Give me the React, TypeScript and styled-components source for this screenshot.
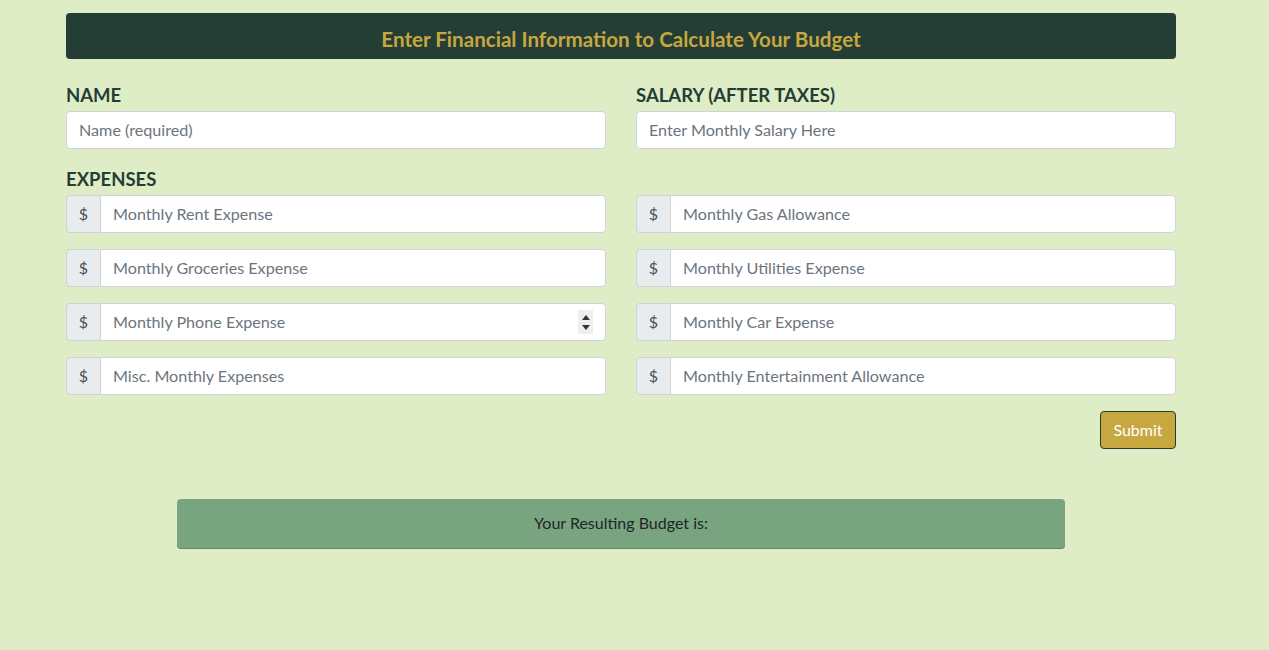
import React from "react";
import styled, { createGlobalStyle } from "styled-components";

const Global = createGlobalStyle`
  html, body { margin: 0; padding: 0; background: #dfedc6; }
  body { font-family: Lato, "Open Sans", sans-serif; color: #212529; }
  * { box-sizing: border-box; }
`;

const Page = styled.div`
  width: 1110px;
  margin-left: 66px;
  padding-top: 13px;
  padding-bottom: 102px;
`;

const TitleBar = styled.h1`
  margin: 0 0 22px;
  height: 46px;
  padding-top: 7px;
  line-height: 38px;
  background: #243d35;
  border-radius: 4px;
  color: #c7a740;
  font-size: 20.6px;
  font-weight: 700;
  text-align: center;
`;

const Grid = styled.div`
  display: grid;
  grid-template-columns: 540px 540px;
  column-gap: 30px;
`;

const Field = styled.div<{ $mb?: number }>`
  display: flex;
  flex-direction: column;
  margin-bottom: ${(p) => p.$mb ?? 16}px;
`;

const Label = styled.label`
  display: block;
  font-size: 18.5px;
  font-weight: 700;
  line-height: 27px;
  padding-top: 1px;
  margin-bottom: 2px;
  color: #243d35;
`;

const Input = styled.input`
  display: block;
  width: 100%;
  height: 38px;
  padding: 5px 12px 7px;
  font-family: Lato, "Open Sans", sans-serif;
  font-size: 16.15px;
  color: #495057;
  background: #fff;
  border: 1px solid #ced4da;
  border-radius: 4px;
  outline: none;
  &::placeholder { color: #6c757d; }
`;

const Group = styled.div`
  position: relative;
  display: flex;
  height: 38px;
  margin-bottom: 16px;
`;

const Addon = styled.span`
  display: flex;
  align-items: center;
  justify-content: center;
  width: 34px;
  flex: none;
  padding-bottom: 2px;
  background: #e9ecef;
  border: 1px solid #ced4da;
  border-right: none;
  border-radius: 4px 0 0 4px;
  color: #495057;
  font-size: 16px;
`;

const GroupInput = styled(Input)`
  border-radius: 0 4px 4px 0;
  flex: 1;
`;

const Spinner = styled.span`
  position: absolute;
  right: 13px;
  top: 7px;
  width: 15px;
  height: 24px;
  background: #efefef;
  display: flex;
  flex-direction: column;
  align-items: center;
  justify-content: center;
  gap: 5px;
  pointer-events: none;
`;

const Tri = styled.span<{ $down?: boolean }>`
  width: 0;
  height: 0;
  border-left: 4px solid transparent;
  border-right: 4px solid transparent;
  ${(p) => (p.$down ? "border-top: 5px solid #333;" : "border-bottom: 5px solid #333;")}
`;

const ButtonRow = styled.div`
  display: flex;
  justify-content: flex-end;
`;

const Submit = styled.button`
  height: 38px;
  width: 76px;
  padding: 0 0 2px;
  background: #c7a740;
  color: #fff;
  border: 1px solid #243d35;
  border-radius: 4px;
  font-family: Lato, "Open Sans", sans-serif;
  font-size: 16px;
`;

const Result = styled.div`
  width: 888px;
  margin: 50px auto 0;
  height: 49px;
  line-height: 48px;
  background: #78a580;
  border-radius: 4px;
  box-shadow: 0 1px 0 #5f8a66;
  text-align: center;
  font-size: 16px;
  color: #212529;
`;

const left = ["Monthly Rent Expense", "Monthly Groceries Expense", "Monthly Phone Expense", "Misc. Monthly Expenses"];
const right = ["Monthly Gas Allowance", "Monthly Utilities Expense", "Monthly Car Expense", "Monthly Entertainment Allowance"];

const Money = ({ ph, spin }: { ph: string; spin?: boolean }) => (
  <Group>
    <Addon>$</Addon>
    <GroupInput placeholder={ph} />
    {spin && (
      <Spinner>
        <Tri />
        <Tri $down />
      </Spinner>
    )}
  </Group>
);

export default function App() {
  return (
    <>
      <Global />
      <Page>
        <TitleBar>Enter Financial Information to Calculate Your Budget</TitleBar>
        <Grid>
          <Field>
            <Label>NAME</Label>
            <Input placeholder="Name (required)" />
          </Field>
          <Field>
            <Label>SALARY (AFTER TAXES)</Label>
            <Input placeholder="Enter Monthly Salary Here" />
          </Field>
          <Field $mb={0}>
            <Label>EXPENSES</Label>
            {left.map((p, i) => (
              <Money key={p} ph={p} spin={i === 2} />
            ))}
          </Field>
          <Field $mb={0}>
            <Label>&nbsp;</Label>
            {right.map((p) => (
              <Money key={p} ph={p} />
            ))}
          </Field>
        </Grid>
        <ButtonRow>
          <Submit>Submit</Submit>
        </ButtonRow>
        <Result>Your Resulting Budget is:</Result>
      </Page>
    </>
  );
}
